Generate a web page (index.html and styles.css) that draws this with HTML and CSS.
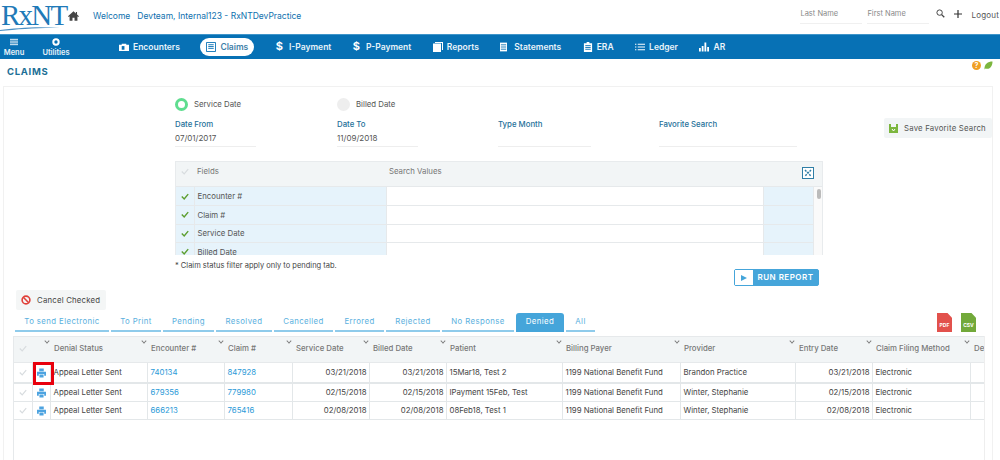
FILE: index.html
```html
<!DOCTYPE html>
<html lang="en">
<head>
<meta charset="utf-8">
<title>RxNT Claims</title>
<link rel="stylesheet" href="styles.css">
</head>
<body>
<header class="topbar">
  <div class="logo">
    <span class="logo-text">RxNT</span>
    <svg class="logo-swoosh" viewBox="0 0 60 8"><path d="M0 7C16 5 38 3 60 5C40 4.500 18 6 0 8Z" fill="#4a90c4"/></svg>
  </div>
  <svg class="home" viewBox="0 0 14 12"><path d="M7 0L0 6.200L1 7.200L2 6.300V12H5.700V8.200H8.300V12H12V6.300L13 7.200L14 6.200L11.500 4V1H10V2.700Z" fill="#444"/></svg>
  <div class="welcome"><span class="welcome-word">Welcome</span><span>Devteam, Internal123 - RxNTDevPractice</span></div>
  <div class="top-right">
    <span class="name-field">Last Name</span>
    <span class="name-field">First Name</span>
    <svg class="top-icon search" viewBox="0 0 12 12"><circle cx="4.800" cy="4.800" r="3.600" fill="none" stroke="#444" stroke-width="1.300"/><path d="M7.500 7.500L11 11" stroke="#444" stroke-width="1.800"/></svg>
    <svg class="top-icon plus" viewBox="0 0 10 10"><path d="M5 0V10M0 5H10" stroke="#333" stroke-width="1.500"/></svg>
    <span class="logout">Logout</span>
  </div>
</header>

<nav class="navbar">
  <div class="nav-small nav-menu">
    <svg viewBox="0 0 9 8"><path d="M0 1H9M0 3H9M0 5H9M0 7H9" stroke="#fff" stroke-width="1"/></svg>
    <span>Menu</span>
  </div>
  <div class="nav-small nav-util">
    <svg viewBox="0 0 8 8"><circle cx="4" cy="4" r="2.700" fill="none" stroke="#fff" stroke-width="2"/></svg>
    <span>Utilities</span>
  </div>
  <div class="nav-items">
    <a class="nav-item"><svg class="ni" viewBox="0 0 11 9"><path d="M0 2H3V1H8V2H11V9H0Z" fill="#fff"/><rect x="3" y="3.500" width="3" height="4" fill="#0771b5"/></svg>Encounters</a>
    <a class="nav-item active"><svg class="ni" viewBox="0 0 11 11"><path d="M0.500 0.500H10.500V10.500H0.500Z" fill="none" stroke="#0771b5"/><path d="M2.500 3H8.500M2.500 5H8.500M2.500 7H8.500" stroke="#0771b5"/></svg>Claims</a>
    <a class="nav-item"><span class="dollar">$</span>I-Payment</a>
    <a class="nav-item"><span class="dollar">$</span>P-Payment</a>
    <a class="nav-item"><svg class="ni" viewBox="0 0 10 10"><path d="M2 0H10V8H9V1H2Z" fill="#fff"/><rect x="0" y="1.500" width="8" height="8.500" fill="#fff"/></svg>Reports</a>
    <a class="nav-item"><svg class="ni ni-s" viewBox="0 0 8 10"><rect width="8" height="10" fill="#fff"/><path d="M1 2.500H7M1 5H7M1 7.500H7" stroke="#0771b5"/></svg>Statements</a>
    <a class="nav-item"><svg class="ni" viewBox="0 0 9 11"><path d="M0 1.500H3V0H6V1.500H9V11H0Z" fill="#fff"/><path d="M1.500 4H7.500M1.500 6H7.500M1.500 8H7.500" stroke="#0771b5"/></svg>ERA</a>
    <a class="nav-item"><svg class="ni" viewBox="0 0 11 8"><path d="M0 1H1.500M3 1H11M0 4H1.500M3 4H11M0 7H1.500M3 7H11" stroke="#fff" stroke-width="1.200"/></svg>Ledger</a>
    <a class="nav-item"><svg class="ni" viewBox="0 0 11 10"><path d="M0 6H2V10H0ZM3 4H5V10H3ZM6 0H8V10H6ZM9 5H11V10H9Z" fill="#fff"/></svg>AR</a>
  </div>
</nav>

<div class="title-row">
  <h1 class="page-title">CLAIMS</h1>
  <div class="title-icons">
    <span class="help">?</span>
    <svg class="leaf" viewBox="0 0 9 9"><path d="M0.500 8.500C0 3 4 0.500 8.500 0.500C8.500 5 6 9 1.500 7.500Z" fill="#7cb63e"/></svg>
  </div>
</div>

<main class="card">
  <section class="search-top">
    <div class="search-form">
      <div class="radio-row">
        <label class="radio-item"><span class="radio on"></span>Service Date</label>
        <label class="radio-item"><span class="radio"></span>Billed Date</label>
      </div>
      <div class="fields">
        <div class="field f1"><span class="field-label">Date From</span><span class="field-value">07/01/2017</span></div>
        <div class="field f1"><span class="field-label">Date To</span><span class="field-value">11/09/2018</span></div>
        <div class="field f2"><span class="field-label">Type Month</span><span class="field-value"></span></div>
        <div class="field f3"><span class="field-label">Favorite Search</span><span class="field-value"></span></div>
      </div>
      <div class="filter">
        <div class="filter-head">
          <svg class="chk" viewBox="0 0 10 8"><path d="M1 4L4 7L9 1" fill="none" stroke="#d8dcdf" stroke-width="1.500"/></svg>
          <span class="fh-fields">Fields</span>
          <span class="fh-values">Search Values</span>
          <svg class="expand" viewBox="0 0 12 12"><rect x="0.500" y="0.500" width="11" height="11" fill="#fff" stroke="#2f7ea6"/><path d="M3 3L9 9M9 3L3 9" stroke="#2f7ea6" stroke-width="1.500" stroke-dasharray="2 1"/></svg>
        </div>
        <div class="filter-body">
          <table class="ftable">
            <colgroup><col class="fc1"><col class="fc2"><col class="fc3"><col class="fc4"></colgroup>
            <tr class="fr"><td class="blue"><svg class="chk" viewBox="0 0 10 8"><path d="M1 4L4 7L9 1" fill="none" stroke="#5d9e2f" stroke-width="1.800"/></svg></td><td class="blue">Encounter #</td><td></td><td class="blue"></td></tr>
            <tr class="fr"><td class="blue"><svg class="chk" viewBox="0 0 10 8"><path d="M1 4L4 7L9 1" fill="none" stroke="#5d9e2f" stroke-width="1.800"/></svg></td><td class="blue">Claim #</td><td></td><td class="blue"></td></tr>
            <tr class="fr"><td class="blue"><svg class="chk" viewBox="0 0 10 8"><path d="M1 4L4 7L9 1" fill="none" stroke="#5d9e2f" stroke-width="1.800"/></svg></td><td class="blue">Service Date</td><td></td><td class="blue"></td></tr>
            <tr class="fr"><td class="blue"><svg class="chk" viewBox="0 0 10 8"><path d="M1 4L4 7L9 1" fill="none" stroke="#5d9e2f" stroke-width="1.800"/></svg></td><td class="blue">Billed Date</td><td></td><td class="blue"></td></tr>
          </table>
          <div class="fscroll"><span class="fthumb"></span></div>
        </div>
      </div>
      <p class="note">* Claim status filter apply only to pending tab.</p>
      <div class="run-row">
        <button class="run"><span class="run-icon"><svg viewBox="0 0 6 6"><path d="M0 0L6 3L0 6Z" fill="#45a5da"/></svg></span><span class="run-label">RUN REPORT</span></button>
      </div>
    </div>
    <button class="save-btn"><svg viewBox="0 0 9 9"><path d="M0 0H2V3H7V0H9V9H0Z" fill="#7cb63e"/><path d="M3 5L4.500 7L6 5" fill="none" stroke="#fff"/></svg>Save Favorite Search</button>
  </section>

  <button class="cancel-btn"><svg viewBox="0 0 10 10"><circle cx="5" cy="5" r="3.900" fill="none" stroke="#e0413a" stroke-width="1.600"/><path d="M2.300 2.300L7.700 7.700" stroke="#e0413a" stroke-width="1.600"/></svg>Cancel Checked</button>

  <div class="tabs-row">
    <div class="tabs">
      <a class="tab t1">To send Electronic</a>
      <a class="tab t2">To Print</a>
      <a class="tab t3">Pending</a>
      <a class="tab t4">Resolved</a>
      <a class="tab t5">Cancelled</a>
      <a class="tab t6">Errored</a>
      <a class="tab t7">Rejected</a>
      <a class="tab t8">No Response</a>
      <a class="tab t9 active">Denied</a>
      <a class="tab t10">All</a>
    </div>
    <div class="exports">
      <span class="doc pdf">PDF</span>
      <span class="doc csv">CSV</span>
    </div>
  </div>

  <div class="grid-wrap">
    <table class="grid">
      <colgroup>
        <col class="c1"><col class="c2"><col class="c3"><col class="c4"><col class="c5"><col class="c6"><col class="c7"><col class="c8"><col class="c9"><col class="c10"><col class="c11"><col class="c12"><col class="c13">
      </colgroup>
      <thead>
        <tr>
          <th><svg class="chk" viewBox="0 0 10 8"><path d="M1 4L4 7L9 1" fill="none" stroke="#d8dcdf" stroke-width="1.500"/></svg></th>
          <th class="caret-only"><i class="caret"></i></th>
          <th>Denial Status<i class="caret"></i></th>
          <th>Encounter #<i class="caret"></i></th>
          <th>Claim #<i class="caret"></i></th>
          <th>Service Date<i class="caret"></i></th>
          <th>Billed Date<i class="caret"></i></th>
          <th>Patient<i class="caret"></i></th>
          <th>Billing Payer<i class="caret"></i></th>
          <th>Provider<i class="caret"></i></th>
          <th>Entry Date<i class="caret"></i></th>
          <th>Claim Filing Method<i class="caret"></i></th>
          <th>De</th>
        </tr>
      </thead>
      <tbody>
        <tr class="first">
          <td><svg class="chk" viewBox="0 0 10 8"><path d="M1 4L4 7L9 1" fill="none" stroke="#d8dcdf" stroke-width="1.500"/></svg></td>
          <td class="print-cell"><svg class="printer" viewBox="0 0 10 10"><path d="M2.500 0H7.500V3H2.500ZM0 3.500H10V8H8V6H2V8H0ZM2.700 6.800H7.300V10H2.700Z" fill="#4da3e0"/></svg><span class="redbox"></span></td>
          <td>Appeal Letter Sent</td><td><a>740134</a></td><td><a>847928</a></td>
          <td class="r">03/21/2018</td><td class="r">03/21/2018</td><td>15Mar18, Test 2</td><td>1199 National Benefit Fund</td><td>Brandon Practice</td><td class="r">03/21/2018</td><td>Electronic</td><td></td>
        </tr>
        <tr>
          <td><svg class="chk" viewBox="0 0 10 8"><path d="M1 4L4 7L9 1" fill="none" stroke="#d8dcdf" stroke-width="1.500"/></svg></td>
          <td class="print-cell"><svg class="printer" viewBox="0 0 10 10"><path d="M2.500 0H7.500V3H2.500ZM0 3.500H10V8H8V6H2V8H0ZM2.700 6.800H7.300V10H2.700Z" fill="#4da3e0"/></svg></td>
          <td>Appeal Letter Sent</td><td><a>679356</a></td><td><a>779980</a></td>
          <td class="r">02/15/2018</td><td class="r">02/15/2018</td><td>IPayment 15Feb, Test</td><td>1199 National Benefit Fund</td><td>Winter, Stephanie</td><td class="r">02/15/2018</td><td>Electronic</td><td></td>
        </tr>
        <tr>
          <td><svg class="chk" viewBox="0 0 10 8"><path d="M1 4L4 7L9 1" fill="none" stroke="#d8dcdf" stroke-width="1.500"/></svg></td>
          <td class="print-cell"><svg class="printer" viewBox="0 0 10 10"><path d="M2.500 0H7.500V3H2.500ZM0 3.500H10V8H8V6H2V8H0ZM2.700 6.800H7.300V10H2.700Z" fill="#4da3e0"/></svg></td>
          <td>Appeal Letter Sent</td><td><a>666213</a></td><td><a>765416</a></td>
          <td class="r">02/08/2018</td><td class="r">02/08/2018</td><td>08Feb18, Test 1</td><td>1199 National Benefit Fund</td><td>Winter, Stephanie</td><td class="r">02/08/2018</td><td>Electronic</td><td></td>
        </tr>
      </tbody>
    </table>
  </div>
</main>
</body>
</html>
```
FILE: styles.css
```css
* { box-sizing: border-box; }
html, body { margin: 0; height: 460px; overflow: hidden; }
body { background: #fff; font-family: Inter, "Liberation Sans", sans-serif; font-size: 8px; color: #444; }
a { text-decoration: none; }
button { font-family: inherit; border: 0; padding: 0; }

.topbar { height: 34px; display: flex; align-items: flex-start; background: #fff; }
.logo { width: 68px; height: 34px; padding-left: 1px; position: relative; }
.logo-text { display: block; font-family: "Liberation Serif", serif; font-size: 29px; line-height: 30px; letter-spacing: -1.800px; color: #1f7ab8; }
.logo-swoosh { position: absolute; left: 0; top: 23px; width: 60px; height: 8px; }
.home { width: 11px; height: 10px; margin-top: 11px; }
.welcome { margin: 11px 0 0 14px; font-size: 8.500px; line-height: 10px; color: #0e70ae; display: flex; gap: 7px; }
.top-right { margin-left: auto; display: flex; align-items: flex-start; }
.name-field { width: 62px; height: 24px; margin-right: 5px; padding-top: 9px; border-bottom: 1px solid #f0f0f0; color: #8a8a8a; font-size: 7.500px; line-height: 10px; margin-top: 0; }
.top-icon { display: block; }
.search { width: 9px; height: 9px; margin: 9px 0 0 2px; }
.plus { width: 8px; height: 8px; margin: 9.500px 0 0 9px; }
.logout { margin: 10px 1px 0 9px; font-size: 8px; line-height: 10px; color: #555; letter-spacing: 0.200px; }

.navbar { height: 25px; background: #0771b5; border-top: 1px solid #3f95ca; display: flex; color: #fff; }
.nav-small { display: flex; flex-direction: column; align-items: center; font-size: 7.500px; font-weight: 600; line-height: 9px; padding-top: 3px; color: #e9f3f9; }
.nav-small svg { width: 8px; height: 8px; margin-bottom: 2px; display: block; }
.nav-menu { width: 28px; }
.nav-util { width: 56px; }
.nav-items { display: flex; align-items: center; gap: 21.500px; margin-left: 35px; height: 24px; padding-bottom: 1px; }
.nav-item { display: flex; align-items: center; color: #eaf4fa; font-size: 8.500px; font-weight: 600; height: 18px; white-space: nowrap; }
.nav-item.active { background: #fff; color: #3f7fa8; border-radius: 9px; padding: 0 6px; margin-left: -1px; }
.ni { width: 10px; height: 10px; margin-right: 4px; display: block; }
.ni-s { width: 7px; margin-right: 7px; }
.nav-item.active .ni { width: 10px; height: 10px; margin-right: 4px; }
.dollar { font-size: 11px; font-weight: 700; margin-right: 6px; line-height: 12px; position: relative; top: -1px; color: #fff; }

.title-row { height: 27px; display: flex; justify-content: space-between; }
.page-title { margin: 7px 0 0 7px; font-size: 9.500px; line-height: 11px; font-weight: 700; letter-spacing: 0.700px; color: #1d6f96; }
.title-icons { display: flex; gap: 3px; padding: 2px 7px 0 0; height: 12px; }
.help { width: 9px; height: 9px; border-radius: 50%; background: #f0a024; color: #fff; font-size: 7px; font-weight: 700; line-height: 9px; text-align: center; }
.leaf { width: 9px; height: 9px; display: block; }

.card { margin: 0 7px 0 3px; height: 374px; border: 1px solid #f1f1f1; border-bottom: 0; background: #fff; }
.search-top { display: flex; height: 199px; }
.search-form { width: 819px; margin-left: 171px; }
.radio-row { display: flex; padding-top: 11px; height: 29px; }
.radio-item { width: 162px; display: flex; align-items: flex-start; color: #555; font-size: 7.800px; line-height: 12px; gap: 6px; }
.radio { width: 13px; height: 13px; border-radius: 50%; background: #eee; display: block; }
.radio.on { background: #fff; border: 3.500px solid #5fdd8f; }
.fields { display: flex; height: 31px; }
.field { display: flex; flex-direction: column; height: 31px; border-bottom: 1px solid #eeeeee; margin-right: 81px; }
.f1 { width: 81px; }
.f2 { width: 93px; margin-right: 68px; margin-left: -1px; }
.f3 { width: 138px; margin-right: 0; }
.field-label { font-size: 7.800px; line-height: 10px; color: #1e7099; font-weight: 500; margin-top: 3px; }
.field-value { font-size: 8px; line-height: 10px; color: #555; margin-top: 4px; }

.filter { margin-top: 14px; width: 648px; border: 1px solid #e8ebed; border-bottom: 0; }
.filter-head { height: 25px; background: #f2f5f6; border-bottom: 1px solid #e6e9eb; display: flex; align-items: flex-start; position: relative; font-size: 7.800px; color: #777; line-height: 10px; padding-top: 4px; }
.chk { width: 8px; height: 7px; display: block; }
.filter-head .chk { margin: 2px 0 0 5px; }
.fh-fields { margin-left: 8px; width: 192px; }
.expand { position: absolute; right: 8px; top: 5px; width: 12px; height: 12px; }
.filter-body { height: 68px; overflow: hidden; display: flex; }
.ftable { width: 637px; border-collapse: collapse; table-layout: fixed; height: 74px; flex: none; }
.fc1 { width: 18px; } .fc2 { width: 192px; } .fc3 { width: 377px; } .fc4 { width: 50px; }
.fr td { height: 18.500px; border: 1px solid #e6e9eb; border-top: 0; font-size: 7.800px; color: #555; padding: 0 0 0 3px; }
.fr td:first-child { border-left: 0; padding-left: 5px; }
.fr td:last-child { border-right: 1px solid #e6e9eb; }
.fr td.blue { background: #e6f3fb; }
.fscroll { width: 10px; flex: none; background: #fafafa; padding: 2px 0 0 3px; }
.fthumb { display: block; width: 4.500px; height: 10px; border-radius: 2px; background: #bbb; }
.note { margin: 6px 0 0 0; font-size: 7.500px; line-height: 10px; color: #444; }
.run-row { width: 644px; display: flex; justify-content: flex-end; margin-top: -2px; }
.run { width: 85px; height: 17px; background: #45a5da; border: 1px solid #45a5da; border-radius: 2px; display: flex; color: #fff; }
.run-icon { width: 18px; height: 15px; background: #fff; display: flex; align-items: center; justify-content: center; }
.run-icon svg { width: 6px; height: 6px; }
.run-label { flex: 1; font-size: 8px; font-weight: 600; line-height: 15px; letter-spacing: 0.500px; text-align: center; }
.save-btn { margin: 31px 0 0 -109px; width: 108px; height: 20px; border-radius: 2px; background: #f2f5f6; color: #555; display: flex; align-items: center; font-size: 7.800px; letter-spacing: 0.200px; padding-left: 5px; flex: none; }
.save-btn svg { width: 9px; height: 9px; margin-right: 6px; }

.cancel-btn { margin: 4px 0 0 12px; width: 90px; height: 20px; background: #f4f6f6; border-radius: 2px; color: #444; display: flex; align-items: center; font-size: 7.800px; letter-spacing: 0.200px; padding-left: 5px; }
.cancel-btn svg { width: 10px; height: 10px; margin-right: 6px; }

.tabs-row { display: flex; margin: 3px 0 0 11px; height: 21px; position: relative; }
.tabs { display: flex; gap: 2px; height: 19px; }
.tab { display: block; height: 19px; border-bottom: 2px solid #8fcbeb; color: #5ab0de; font-size: 7.800px; letter-spacing: 0.400px; line-height: 17px; text-align: center; }
.t1 { width: 94px; } .t2 { width: 50px; } .t3 { width: 51px; } .t4 { width: 56px; } .t5 { width: 59px; }
.t6 { width: 49px; } .t7 { width: 54px; } .t8 { width: 72px; } .t9 { width: 48px; } .t10 { width: 29px; }
.tab.active { background: #45a5da; color: #fff; border-radius: 3px 3px 0 0; border-bottom-color: #45a5da; }
.exports { margin-left: auto; display: flex; gap: 9px; padding-right: 16px; }
.doc { display: block; width: 15px; height: 19px; font-size: 5px; font-weight: 700; color: #fff; text-align: center; padding-top: 9px; line-height: 7px; clip-path: polygon(0 0, 70% 0, 100% 25%, 100% 100%, 0 100%); }
.pdf { background: #e2514c; }
.csv { background: #72a93a; }

.grid-wrap { margin: 2px 0 0 9px; width: 972px; height: 125px; border-left: 1px solid #e6e9eb; border-right: 1px solid #eeeeee; overflow: hidden; }
.grid { width: 971px; border-collapse: collapse; table-layout: fixed; }
.c1 { width: 18px; } .c2 { width: 18px; } .c3 { width: 97px; } .c4 { width: 77px; } .c5 { width: 68px; } .c6 { width: 77px; }
.c7 { width: 77px; } .c8 { width: 116px; } .c9 { width: 118px; } .c10 { width: 115px; } .c11 { width: 77px; } .c12 { width: 98px; } .c13 { width: 15px; }
.grid th { height: 26px; background: #f2f5f6; border-top: 1px solid #e6e9eb; border-bottom: 1px solid #e6e9eb; text-align: left; vertical-align: top; font-size: 7.800px; font-weight: 500; color: #777; line-height: 10px; padding: 6px 0 0 4px; position: relative; white-space: nowrap; overflow: hidden; }
.grid th:first-child { padding-left: 5px; }
.grid th:first-child .chk { margin-top: 2px; }
.caret { position: absolute; right: 1px; top: 2px; width: 4px; height: 4px; border-right: 1px solid #777; border-bottom: 1px solid #777; transform: rotate(45deg) scale(0.9); }
.grid td { height: 18.500px; padding: 0 2px 0 3px; border: 1px solid #e3e7e9; border-top: 0; font-size: 7.800px; color: #444; white-space: nowrap; overflow: hidden; }
.grid tr.first td { height: 20px; border-bottom-width: 2px; }
.grid td:first-child { border-left: 0; padding-left: 5px; }
.grid td:last-child { border-right: 0; }
.grid td a { color: #2b9ad8; }
.grid td.r { text-align: right; }
.grid td.print-cell { padding: 0; position: relative; overflow: visible; }
.printer { width: 9px; height: 10px; display: block; margin: 2px 0 0 4px; }
.redbox { position: absolute; left: 0; top: -1px; width: 21px; height: 23px; border: 3px solid #e8000d; }
```
